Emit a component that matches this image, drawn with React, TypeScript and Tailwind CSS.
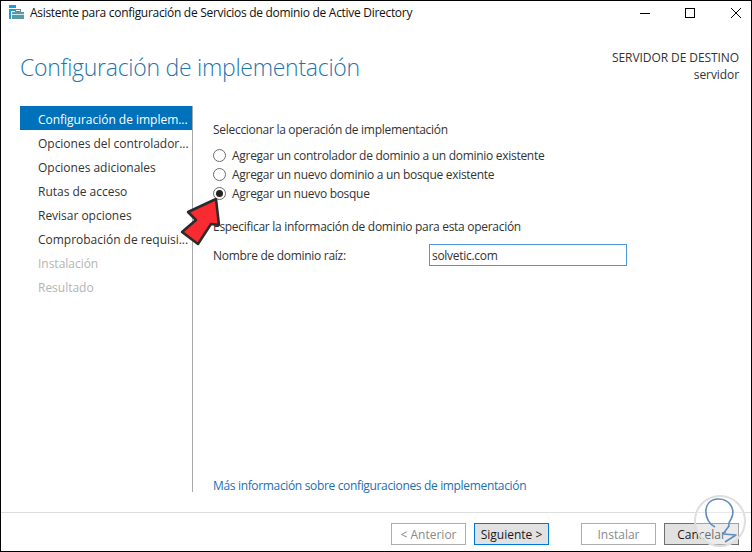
const steps = [
  { label: "Configuración de implem...", state: "active" },
  { label: "Opciones del controlador...", state: "normal" },
  { label: "Opciones adicionales", state: "normal" },
  { label: "Rutas de acceso", state: "normal" },
  { label: "Revisar opciones", state: "normal" },
  { label: "Comprobación de requisi...", state: "normal" },
  { label: "Instalación", state: "disabled" },
  { label: "Resultado", state: "disabled" },
];

const operations = [
  { label: "Agregar un controlador de dominio a un dominio existente", checked: false },
  { label: "Agregar un nuevo dominio a un bosque existente", checked: false },
  { label: "Agregar un nuevo bosque", checked: true },
];

function WizardIcon() {
  return (
    <svg width="15" height="14" viewBox="0 0 15 14" className="shrink-0 mb-[3px]">
      <rect x="0" y="0" width="7" height="14" fill="#1e9ad6" />
      <rect x="0" y="3" width="7" height="1" fill="#ffffff" />
      <rect x="2" y="6" width="13" height="8" fill="#ffffff" />
      <rect x="3" y="7" width="12" height="7" fill="#5d9aa6" />
      <rect x="6.5" y="4.5" width="5" height="2" fill="none" stroke="#5d8f9a" strokeWidth="1" />
      <rect x="3" y="9" width="12" height="1" fill="#d5e6ea" />
    </svg>
  );
}

function Radio({ checked }: { checked: boolean }) {
  return (
    <span className="w-[13px] h-[13px] rounded-full border border-[#6b6b6b] bg-white flex items-center justify-center shrink-0">
      {checked && <span className="w-[7px] h-[7px] rounded-full bg-[#222222]" />}
    </span>
  );
}

function FooterButton({ label, variant }: { label: string; variant: "disabled" | "primary" | "normal" }) {
  const styles = {
    disabled: "border-[#adadad] bg-white text-[#8a8a8a]",
    primary: "border-[#0078d7] bg-[#e1e1e1] text-[#1a1a1a]",
    normal: "border-[#6f6f6f] bg-[#e1e1e1] text-[#1a1a1a]",
  };
  return (
    <button className={`w-[75px] h-[22px] border-[1px] pt-[2px] text-[12px] leading-none flex items-center justify-center ${styles[variant]}`}>
      {label}
    </button>
  );
}

export default function App() {
  return (
    <div className="relative w-[752px] h-[552px] overflow-hidden bg-white border border-black flex flex-col font-['Open_Sans','Liberation_Sans',sans-serif] text-[12px] text-[#333333]">
      {/* barra de titulo */}
      <div className="h-[24px] flex items-center pl-[8px] shrink-0">
        <WizardIcon />
        <span className="ml-[6px] text-[12px] text-[#111111] tracking-[-0.3px] whitespace-nowrap">
          Asistente para configuración de Servicios de dominio de Active Directory
        </span>
        <div className="ml-auto pr-[10px] flex items-center text-black">
          <span className="w-[10px] h-px bg-black" />
          <span className="ml-[35px] w-[10px] h-[10px] border border-black" />
          <svg className="ml-[36px]" width="10" height="10" viewBox="0 0 10 10">
            <path d="M0 0L10 10M10 0L0 10" stroke="#000" strokeWidth="1" fill="none" />
          </svg>
        </div>
      </div>

      {/* cabecera */}
      <div className="h-[81px] shrink-0 flex justify-between pl-[19px] pr-[12px]">
        <h1 className="mt-[26px] text-[23px] leading-[32px] font-light text-[#1f76ad] tracking-[-0.27px] whitespace-nowrap">
          Configuración de implementación
        </h1>
        <div className="mt-[24px] text-right text-[12px] leading-[17px] text-[#333333] tracking-[-0.08px]">
          <div>SERVIDOR DE DESTINO</div>
          <div>servidor</div>
        </div>
      </div>

      <div className="flex-1 flex min-h-0">
        {/* pasos */}
        <div className="w-[192px] shrink-0 pl-[19px] h-[386px] border-r border-[#a9a9a9]">
          {steps.map((step) => (
            <div
              key={step.label}
              className={`h-[24px] pl-[18px] pt-[3px] flex items-center whitespace-nowrap tracking-[-0.02px] ${
                step.state === "active"
                  ? "bg-[#0072bc] text-white"
                  : step.state === "disabled"
                    ? "text-[#b4b4b4]"
                    : "text-[#333333]"
              }`}
            >
              {step.label}
            </div>
          ))}
        </div>

        {/* contenido */}
        <div className="flex-1 pl-[20px] pt-[16px] h-[386px] flex flex-col tracking-[-0.29px]">
          <div className="leading-[16px]">Seleccionar la operación de implementación</div>
          <div className="mt-[9px] flex flex-col gap-[3px]">
            {operations.map((op) => (
              <label key={op.label} className="h-[16px] flex items-center gap-[6px]">
                <Radio checked={op.checked} />
                <span className="pt-[1px]">{op.label}</span>
              </label>
            ))}
          </div>
          <div className="mt-[18px] leading-[16px]">Especificar la información de dominio para esta operación</div>
          <div className="mt-[9px] flex items-center">
            <span className="w-[216px] pt-[1px]">Nombre de dominio raíz:</span>
            <div className="w-[198px] h-[22px] border border-[#4f97dc] pl-[2px] pt-[1px] flex items-center">
              solvetic.com
            </div>
          </div>
          <a className="mt-auto -mb-[2px] leading-[16px] tracking-[-0.34px] text-[#1c6fb0]">
            Más información sobre configuraciones de implementación
          </a>
        </div>
      </div>

      {/* pie */}
      <div className="h-[39px] shrink-0 border-t border-[#dcdcdc] flex items-start justify-end pt-[10px] pr-[12px]">
        <FooterButton label="< Anterior" variant="disabled" />
        <div className="ml-[8px]">
          <FooterButton label="Siguiente >" variant="primary" />
        </div>
        <div className="ml-[32px]">
          <FooterButton label="Instalar" variant="disabled" />
        </div>
        <div className="ml-[8px]">
          <FooterButton label="Cancelar" variant="normal" />
        </div>
      </div>

      {/* flecha */}
      <svg className="absolute left-[174px] top-[189px]" width="60" height="60" viewBox="0 0 60 60">
        <path
          d="M41 9L44 35L36 34L23 54L7 42L21 30L13 22Z"
          fill="#f92a30"
          stroke="#2b2b2b"
          strokeWidth="2.5"
          strokeLinejoin="round"
        />
      </svg>

      {/* marca de agua */}
      <svg className="absolute left-[681px] top-[491px]" width="70" height="60" viewBox="0 0 70 60" fill="none">
        <circle cx="38" cy="29" r="25" fill="#ffffff" fillOpacity="0.35" stroke="#dedede" strokeWidth="2" />
        <path d="M33 35C22 30 19 9 35 7C48 6 54 18 49 27C47 30 46 32 47 35" stroke="#5f8dbd" strokeWidth="1.6" />
        <path d="M47 34L41 42L54 43L43 50" stroke="#5f8dbd" strokeWidth="1.6" strokeLinejoin="round" />
      </svg>
    </div>
  );
}
